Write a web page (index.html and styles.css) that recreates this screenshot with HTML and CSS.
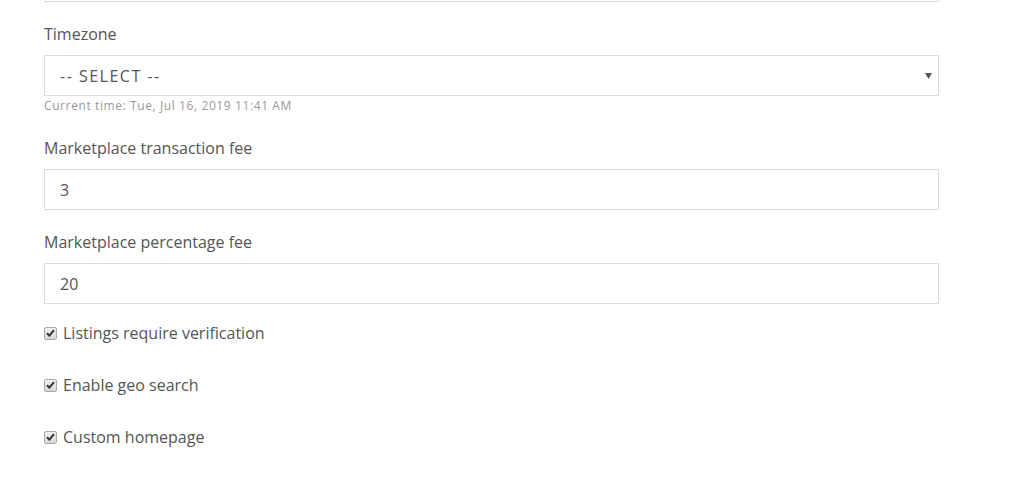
FILE: index.html
```html
<!DOCTYPE html>
<html lang="en">
<head>
  <meta charset="UTF-8" />
  <meta name="viewport" content="width=device-width, initial-scale=1.0" />
  <title>Marketplace settings</title>
  <link rel="stylesheet" href="styles.css">
</head>
<body>
  <form class="settings">
    <div class="field field-cut">
      <input type="text" class="text-input" value="">
    </div>
    <div class="field">
      <label class="field-label">Timezone</label>
      <div class="select-box">
        <span class="select-value">-- SELECT --</span>
        <svg class="caret" width="7" height="6" viewBox="0 0 7 6"><path d="M0 0H7L3.5 6Z" fill="#555"/></svg>
      </div>
      <p class="hint">Current time: Tue, Jul 16, 2019 11:41 AM</p>
    </div>
    <div class="field">
      <label class="field-label">Marketplace transaction fee</label>
      <input type="text" class="text-input" value="3">
    </div>
    <div class="field">
      <label class="field-label">Marketplace percentage fee</label>
      <input type="text" class="text-input" value="20">
    </div>
    <!-- checkbox options -->
    <label class="check"><span class="box"><svg width="9" height="8" viewBox="0 0 9 8"><path d="M1 4.2L3.4 6.6L8 1.2" stroke="#333" stroke-width="2" fill="none"/></svg></span>Listings require verification</label>
    <label class="check"><span class="box"><svg width="9" height="8" viewBox="0 0 9 8"><path d="M1 4.2L3.4 6.6L8 1.2" stroke="#333" stroke-width="2" fill="none"/></svg></span>Enable geo search</label>
    <label class="check"><span class="box"><svg width="9" height="8" viewBox="0 0 9 8"><path d="M1 4.2L3.4 6.6L8 1.2" stroke="#333" stroke-width="2" fill="none"/></svg></span>Custom homepage</label>
  </form>
</body>
</html>
```

FILE: styles.css
```css
body {
  margin: 0;
  background: #fff;
  font-family: "Open Sans", "Noto Sans", sans-serif;
  color: #555;
  font-size: 16px;
}
.settings {
  width: 895px;
  padding-left: 44px;
}
.field {
  margin-bottom: 22px;
}
.field-cut {
  margin-top: -39px;
}
.field-label {
  display: block;
  line-height: 20px;
  margin-bottom: 11px;
}
.text-input,
.select-box {
  box-sizing: border-box;
  width: 100%;
  height: 41px;
  border: 1px solid #d9dce2;
  border-radius: 0;
  padding: 0 15px;
  font-family: inherit;
  font-size: 16px;
  color: #555;
  background: #fff;
  outline: none;
}
.select-box {
  display: flex;
  align-items: center;
  justify-content: space-between;
  padding-right: 6px;
}
.select-value {
  letter-spacing: 1.5px;
}
.caret {
  display: block;
}
.hint {
  margin: 3px 0 0;
  padding-bottom: 3px;
  font-size: 12px;
  letter-spacing: 0.6px;
  line-height: 14px;
  color: #999;
}
.check {
  display: flex;
  align-items: center;
  gap: 6px;
  height: 20px;
  margin-bottom: 32px;
}
.check:first-of-type {
  margin-top: -3px;
}
.box {
  box-sizing: border-box;
  width: 13px;
  height: 13px;
  border: 1px solid #a9a9a9;
  border-radius: 2px;
  background: linear-gradient(#f0f0f0, #d8d8d8);
  display: flex;
  align-items: center;
  justify-content: center;
}
```
